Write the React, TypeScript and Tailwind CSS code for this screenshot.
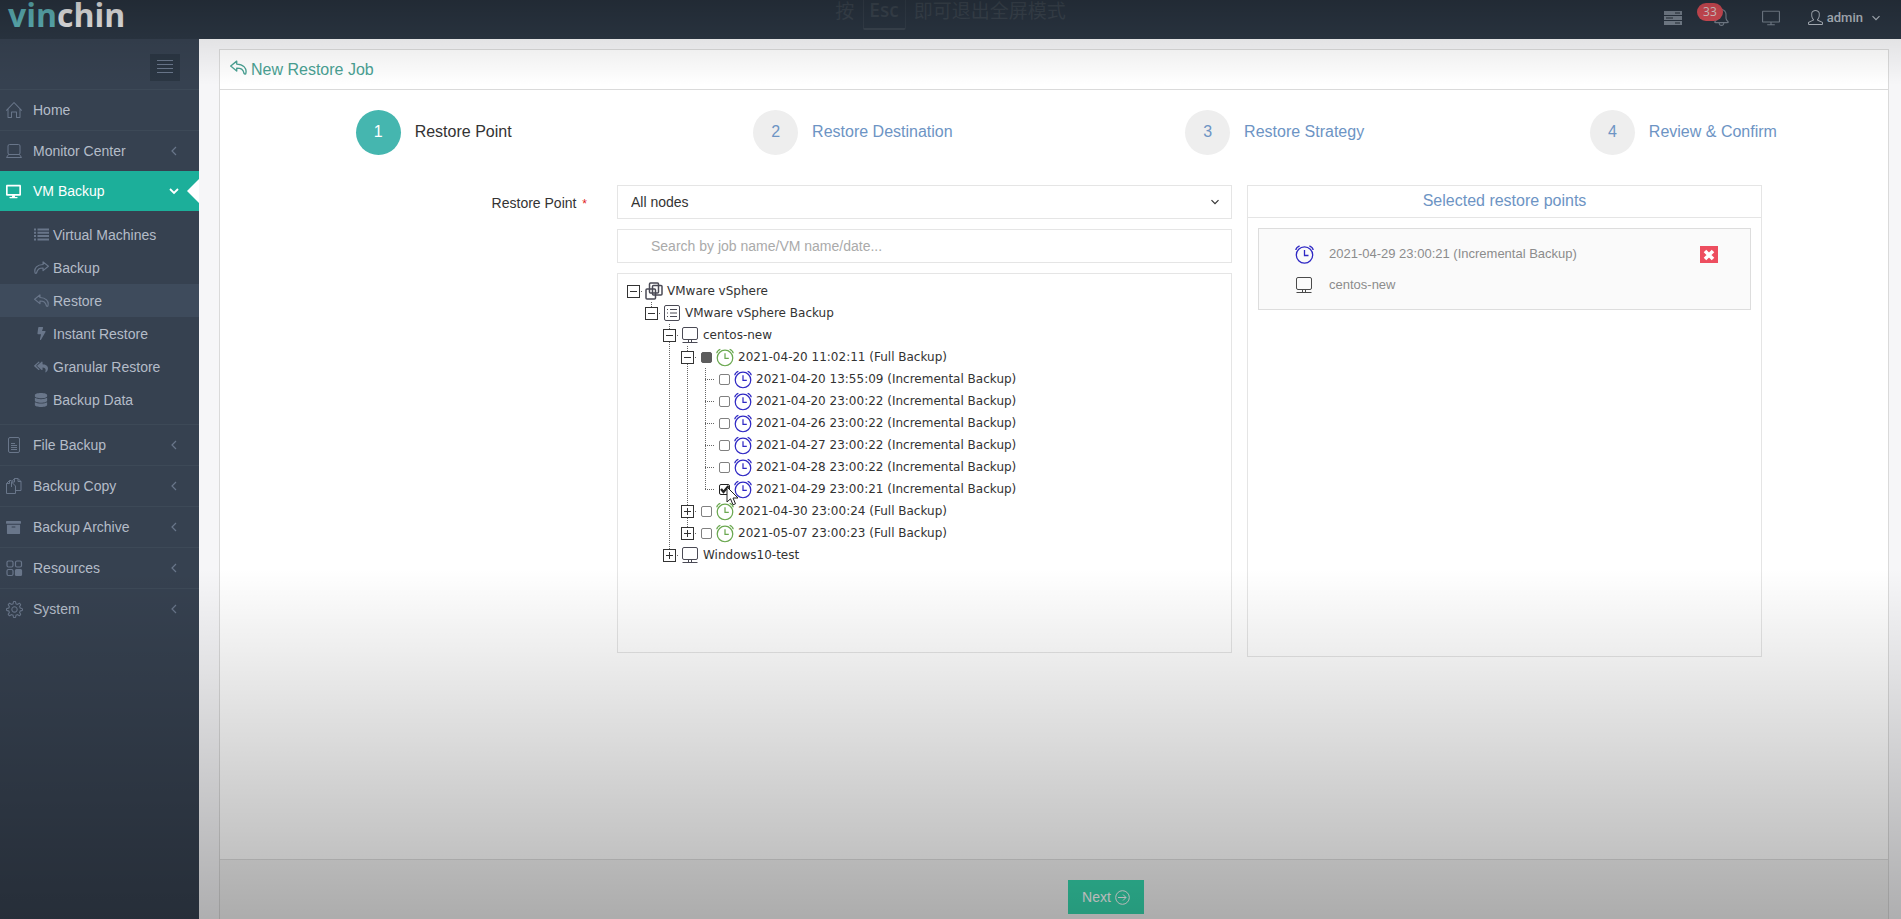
import { useState } from "react";
import type { ReactNode } from "react";
import { FaArchive, FaBolt, FaDatabase, FaDesktop, FaReplyAll } from "react-icons/fa";
import { SlBell, SlHome, SlScreenDesktop, SlSettings, SlUser } from "react-icons/sl";

function ArrowIcon({ forward = false, size = 16 }: { forward?: boolean; size?: number }) {
  return (
    <svg width={size} height={size} viewBox="0 0 24 24" fill="none" stroke="currentColor" strokeWidth="1.900" strokeLinejoin="round" aria-hidden="true">
      <path
        transform={forward ? "matrix(-1 0 0 1 24 0)" : undefined}
        d="M9.500 3 1 10l8.500 7v-4.200c6 0 9 1.200 10.500 8 .4.600 1.600.600 2.200 0C24.500 13 18.500 7.200 9.500 7.200z"
      />
    </svg>
  );
}

function ListIcon() {
  return (
    <svg width="15" height="13" viewBox="0 0 15 13" stroke="currentColor" strokeWidth="2" aria-hidden="true">
      <path d="M0 1.500h2M3.500 1.500H15M0 4.800h2M3.500 4.800H15M0 8.100h2M3.500 8.100H15M0 11.400h2M3.500 11.400H15" />
    </svg>
  );
}

function LaptopIcon() {
  return (
    <svg width="16" height="16" viewBox="0 0 16 16" fill="none" stroke="currentColor" aria-hidden="true">
      <rect x="2" y="1.500" width="12" height="10" rx="1.500" />
      <path d="M2.500 11.500h11l2 3H.5z" />
    </svg>
  );
}

function FileIcon() {
  return (
    <svg width="16" height="18" viewBox="0 0 16 18" fill="none" stroke="currentColor" aria-hidden="true">
      <rect x="2.500" y="1.500" width="11" height="15" rx="1.500" />
      <path d="M5 7.500h4M5 9.500h6M5 11.500h6M5 13.500h6" />
    </svg>
  );
}

function CopyIcon() {
  return (
    <svg width="16" height="18" viewBox="0 0 16 18" fill="none" stroke="currentColor" aria-hidden="true">
      <path d="M5.500 3.500h-2l-3 3v10h9v-3M3.500 3.500v3h-3M5.500 5l3-3.500h3.500l3 3v9H9.500M5.500 5v5M8.500 1.500V5h-3l4 4v5M12 1.500v3h3" />
    </svg>
  );
}

function ResourcesIcon() {
  return (
    <svg width="17" height="17" viewBox="0 0 17 17" fill="none" stroke="currentColor" strokeWidth="1.200" aria-hidden="true">
      <rect x="1" y="1" width="6" height="6" rx="1.500" />
      <rect x="9.500" y="1" width="6" height="6" rx="1.500" />
      <rect x="1" y="9.500" width="6" height="6" rx="1.500" />
      <rect x="9.500" y="9.500" width="6" height="6" rx="1" fill="currentColor" />
    </svg>
  );
}

function ServerIcon() {
  return (
    <svg width="18" height="14" viewBox="0 0 18 14" aria-hidden="true">
      <path fill="currentColor" d="M0 0h18v4H0zM0 5h18v4H0zM0 10h18v4H0z" />
      <path className="stroke-[#27303b]" d="M11 2h5M2 7h7M11 12h5" />
    </svg>
  );
}

function Chevron({ dir, size = 10 }: { dir: "left" | "down"; size?: number }) {
  return (
    <svg width={size} height={size} viewBox="0 0 10 10" fill="none" stroke="currentColor" strokeWidth="1.200" aria-hidden="true">
      <path d={dir === "left" ? "M7 1 3 5l4 4" : "M1.500 3.200 5 6.700l3.500-3.500"} />
    </svg>
  );
}

function ClockIcon() {
  return (
    <svg width="19" height="19" viewBox="0 0 19 19" fill="none" stroke="currentColor" strokeWidth="1.300" aria-hidden="true">
      <circle cx="9.500" cy="10" r="8.200" />
      <path d="M9.500 5v5.500h4M.8 5Q1.200 2.300 4.600.8M18.200 5Q17.800 2.300 14.400.8" />
    </svg>
  );
}

function VmIcon() {
  return (
    <svg width="18" height="18" viewBox="0 0 18 18" fill="none" stroke="currentColor" aria-hidden="true">
      <rect x="1.500" y="1.500" width="15" height="12" rx="1.500" />
      <path d="M7.500 14v2M10.500 14v2M1.500 16.500h15" />
    </svg>
  );
}

function ClusterIcon() {
  return (
    <svg width="18" height="18" viewBox="0 0 18 18" fill="none" stroke="currentColor" strokeWidth="1.500" aria-hidden="true">
      <rect x="4.500" y="1" width="9" height="10" rx="1" />
      <rect x="7.500" y="3.500" width="9.500" height="9.500" rx="1" />
      <rect x="1" y="7" width="9.500" height="10" rx="1" />
    </svg>
  );
}

function JobIcon() {
  return (
    <svg width="18" height="18" viewBox="0 0 18 18" fill="none" stroke="currentColor" aria-hidden="true">
      <rect x="1.500" y="1.500" width="15" height="15" rx="1.500" />
      <path d="M4 5.500h1M4 9h1M4 12.500h1M7 5.500h7M7 9h7M7 12.500h7" />
    </svg>
  );
}

type MenuItem = { label: string; icon: ReactNode };

const subMenu: MenuItem[] = [
  { label: "Virtual Machines", icon: <ListIcon /> },
  { label: "Backup", icon: <ArrowIcon forward size={15} /> },
  { label: "Restore", icon: <ArrowIcon size={15} /> },
  { label: "Instant Restore", icon: <FaBolt size={13} /> },
  { label: "Granular Restore", icon: <FaReplyAll size={14} /> },
  { label: "Backup Data", icon: <FaDatabase size={14} /> },
];

const lowerMenu: MenuItem[] = [
  { label: "File Backup", icon: <FileIcon /> },
  { label: "Backup Copy", icon: <CopyIcon /> },
  { label: "Backup Archive", icon: <FaArchive size={15} /> },
  { label: "Resources", icon: <ResourcesIcon /> },
  { label: "System", icon: <SlSettings size={17} /> },
];

function NavRow({ item, expandable = true }: { item: MenuItem; expandable?: boolean }) {
  return (
    <li className="border-t border-[#3d4957]">
      <a href="#" className="flex h-10 items-center pr-5 pl-1.5 text-[#b4bcc8]">
        <span className="flex w-[27px] text-[#69768a]">{item.icon}</span>
        <span className="flex-1">{item.label}</span>
        {expandable && (
          <span className="text-[#69768a]">
            <Chevron dir="left" />
          </span>
        )}
      </a>
    </li>
  );
}

function Sidebar() {
  return (
    <nav className="w-[199px] shrink-0 bg-[#364150] text-sm">
      <div className="flex h-[50px] items-center justify-end pt-2 pr-[19px] pb-0.5">
        <button type="button" aria-label="Toggle menu" className="flex h-[27px] w-[30px] items-center justify-center bg-[#2b3643] text-[#69768a]">
          <svg width="16" height="14" viewBox="0 0 16 14" stroke="currentColor" aria-hidden="true">
            <path d="M0 .5h16M0 4.500h16M0 8.500h16M0 12.500h16" />
          </svg>
        </button>
      </div>
      <ul>
        <NavRow item={{ label: "Home", icon: <SlHome size={16} /> }} expandable={false} />
        <NavRow item={{ label: "Monitor Center", icon: <LaptopIcon /> }} />
        <li>
          <a href="#" className="flex h-10 items-center bg-[#1caf9a] pl-1.5 text-white">
            <span className="flex w-[27px]">
              <FaDesktop size={15} />
            </span>
            <span className="flex-1">VM Backup</span>
            <svg width="10" height="10" viewBox="0 0 10 10" fill="none" stroke="currentColor" strokeWidth="1.800" aria-hidden="true">
              <path d="M1 3l4 4 4-4" />
            </svg>
            <svg className="ml-2" width="12" height="24" viewBox="0 0 12 24" fill="#fff" aria-hidden="true">
              <path d="M12 0v24L0 12z" />
            </svg>
          </a>
          <ul className="pt-[7px] pb-2">
            {subMenu.map((item) => (
              <li key={item.label}>
                <a
                  href="#"
                  className={`flex h-[33px] items-center pl-[33px] text-[#b4bcc8] ${item.label === "Restore" ? "bg-[#3e4b5c]" : ""}`}
                >
                  <span className="mr-1 flex w-4 justify-center text-[#69768a]">{item.icon}</span>
                  {item.label}
                </a>
              </li>
            ))}
          </ul>
        </li>
        {lowerMenu.map((item) => (
          <NavRow key={item.label} item={item} />
        ))}
      </ul>
    </nav>
  );
}

function Header() {
  return (
    <header className="relative flex h-[39px] shrink-0 items-center justify-between bg-[#2b3643] pl-2">
      <a href="#" className="self-start font-['Open_Sans'] text-[32px] leading-[30px] font-bold text-[#eeeeee]">
        <span className="text-[#5fb5ba]">vin</span>chin
      </a>
      <p className="absolute top-0 left-1/2 flex -translate-x-1/2 items-start gap-2 font-['Noto_Sans_CJK_SC',sans-serif] text-[19px] leading-5 whitespace-nowrap text-[#3c4651]">
        按
        <kbd className="h-[30px] rounded-b-xs border-x border-b-2 border-[#3c4651] px-1.5 font-['Open_Sans'] font-semibold">Esc</kbd>
        即可退出全屏模式
      </p>
      <div className="flex h-full items-center pr-5 pb-1 text-[#7c8794]">
        <button type="button" aria-label="Tasks" className="mr-[15px]">
          <ServerIcon />
        </button>
        <button type="button" aria-label="Notifications" className="mr-8 flex items-center">
          <span className="z-10 -mt-3 -mr-2.5 h-[18px] rounded-full bg-[#e0505a] px-1.5 font-['Open_Sans'] text-xs leading-[18px] text-[#eadada]">33</span>
          <SlBell size={17} />
        </button>
        <button type="button" aria-label="Screen" className="mr-7">
          <SlScreenDesktop size={18} />
        </button>
        <button type="button" className="flex items-center font-['Roboto'] text-[13px] font-medium text-[#b9c0c9]">
          <SlUser size={15} />
          <span className="mr-2 ml-1">admin</span>
          <Chevron dir="down" size={10} />
        </button>
      </div>
    </header>
  );
}

const steps = ["Restore Point", "Restore Destination", "Restore Strategy", "Review & Confirm"];

function Steps() {
  return (
    <ol className="grid grid-cols-[427fr_411fr_432fr_385fr] pt-5 pr-3 text-base">
      {steps.map((label, i) => (
        <li key={label} className="flex items-center justify-center gap-3.5">
          <span
            className={`flex size-[45px] items-center justify-center rounded-full pb-0.5 ${i === 0 ? "bg-[#45b6af] text-white" : "bg-[#eeeeee] text-[#6d94c4]"}`}
          >
            {i + 1}
          </span>
          <span className={`pb-0.5 ${i === 0 ? "text-[#333333]" : "text-[#6d94c4]"}`}>{label}</span>
        </li>
      ))}
    </ol>
  );
}

type Cell = "gap" | "line" | "open" | "openMore" | "openRoot" | "closed" | "closedMore" | "leaf" | "leafLast";

function Branch({ kind }: { kind: Cell }) {
  const above = kind !== "gap" && kind !== "openRoot";
  const below = kind === "line" || kind === "openMore" || kind === "closedMore" || kind === "leaf";
  const side = kind !== "gap" && kind !== "line";
  const box = side && !kind.startsWith("leaf");
  const drawing = (
    <svg width="18" height="22" viewBox="0 0 18 22" fill="none" aria-hidden="true">
      <g stroke="#666" strokeDasharray="1 1">
        {above && <path d="M9.500 0v12" />}
        {below && <path d="M9.500 12v10" />}
        {side && <path d="M9 11.500h9" />}
      </g>
      {box && (
        <g stroke="#333">
          <rect x="3.500" y="5.500" width="12" height="12" fill="#fff" />
          <path d={kind.startsWith("open") ? "M6 11.500h7" : "M6 11.500h7M9.500 8v7"} />
        </g>
      )}
    </svg>
  );
  if (!box) return drawing;
  return (
    <button type="button" aria-label={kind.startsWith("open") ? "Collapse" : "Expand"}>
      {drawing}
    </button>
  );
}

type Row = { cells: Cell[]; label: string; icon: "cluster" | "job" | "vm" | "full" | "inc"; check?: "off" | "on" | "part" };

const incrementals = [
  "2021-04-20 13:55:09",
  "2021-04-20 23:00:22",
  "2021-04-26 23:00:22",
  "2021-04-27 23:00:22",
  "2021-04-28 23:00:22",
  "2021-04-29 23:00:21",
];

const rows: Row[] = [
  { cells: ["openRoot"], label: "VMware vSphere", icon: "cluster" },
  { cells: ["gap", "open"], label: "VMware vSphere Backup", icon: "job" },
  { cells: ["gap", "gap", "openMore"], label: "centos-new", icon: "vm" },
  { cells: ["gap", "gap", "line", "openMore"], label: "2021-04-20 11:02:11 (Full Backup)", icon: "full", check: "part" },
  ...incrementals.map((time, i): Row => {
    const last = i === incrementals.length - 1;
    return {
      cells: ["gap", "gap", "line", "line", last ? "leafLast" : "leaf"],
      label: `${time} (Incremental Backup)`,
      icon: "inc",
      check: last ? "on" : "off",
    };
  }),
  { cells: ["gap", "gap", "line", "closedMore"], label: "2021-04-30 23:00:24 (Full Backup)", icon: "full", check: "off" },
  { cells: ["gap", "gap", "line", "closed"], label: "2021-05-07 23:00:23 (Full Backup)", icon: "full", check: "off" },
  { cells: ["gap", "gap", "closed"], label: "Windows10-test", icon: "vm" },
];

const rowIcons = {
  cluster: <ClusterIcon />,
  job: <JobIcon />,
  vm: <VmIcon />,
  full: <ClockIcon />,
  inc: <ClockIcon />,
};

const rowIconColors = {
  cluster: "text-[#4a4a55]",
  job: "text-[#4a4a55]",
  vm: "text-[#4a4a55]",
  full: "text-[#6aa84f]",
  inc: "text-[#2f28c4]",
};

function TreeRow({ row }: { row: Row }) {
  const [on, setOn] = useState(row.check === "on");
  return (
    <li className="flex h-[22px] items-center">
      {row.cells.map((kind, i) => (
        <Branch key={i} kind={kind} />
      ))}
      <label className="ml-px flex items-center">
        {row.check && (
          <span className="relative ml-1 flex">
            <input
              type="checkbox"
              checked={on}
              onChange={() => setOn(!on)}
              className={`size-[11px] appearance-none rounded-xs border ${row.check === "part" ? "border-[#5c5c5c] bg-[#5c5c5c]" : on ? "border-[#222222] bg-white" : "border-[#808080] bg-white"}`}
            />
            {on && (
              <svg className="absolute top-0 left-0" width="11" height="11" viewBox="0 0 11 11" fill="none" stroke="#222" strokeWidth="2.400" aria-hidden="true">
                <path d="M2 5l2.500 3L9.500 2" />
              </svg>
            )}
            {row.check === "on" && (
              <svg className="pointer-events-none absolute top-0.5 left-[7px] z-10" width="13" height="20" viewBox="0 0 13 20" fill="#fff" stroke="#222" aria-hidden="true">
                <path d="M1 1v15l3.500-3.200 2.500 6 2.500-1-2.500-5.800H12z" />
              </svg>
            )}
          </span>
        )}
        <span className={`mr-1 flex w-[18px] ${row.check ? "ml-1" : "ml-0.5"} ${rowIconColors[row.icon]}`}>{rowIcons[row.icon]}</span>
        {row.label}
      </label>
    </li>
  );
}

function RestoreForm() {
  return (
    <form className="grid grid-cols-[382fr_615fr_515fr_111fr] items-start gap-x-[15px] pt-[30px] text-sm">
      <label htmlFor="node" className="pt-2 pr-[15px] text-right text-[#333333]">
        Restore Point <span className="ml-0.5 text-xs text-[#e02222]">*</span>
      </label>
      <div className="flex flex-col gap-2.5">
        <div className="relative">
          <select id="node" className="block h-[34px] w-full appearance-none border border-[#e5e5e5] bg-white px-[13px] text-[#333333]">
            <option>All nodes</option>
          </select>
          <span className="pointer-events-none absolute top-3 right-3 text-[#333333]">
            <Chevron dir="down" />
          </span>
        </div>
        <input
          type="text"
          aria-label="Search restore points"
          placeholder="Search by job name/VM name/date..."
          className="h-[34px] w-full border border-[#e5e5e5] bg-white px-[33px] placeholder:text-[#aaaaaa]"
        />
        <ul className="h-[380px] border border-[#e5e5e5] pt-1.5 pl-1.5 font-['DejaVu_Sans'] text-xs text-[#333333]">
          {rows.map((row) => (
            <TreeRow key={row.label} row={row} />
          ))}
        </ul>
      </div>
      <section className="h-[472px] border border-[#e5e5e5]">
        <h2 className="border-b border-[#e5e5e5] pt-[3px] pb-1 text-center text-base text-[#6d94c4]">Selected restore points</h2>
        <div className="m-2.5 flex items-start border border-[#dddddd] bg-[#fafafa] pt-[15px] pr-8 pb-3.5 pl-9 text-[13px] leading-5 text-[#8c8c8c]">
          <dl className="grid flex-1 grid-cols-[20px_1fr] items-center gap-x-3.5 gap-y-[11px]">
            <dt className="text-[#2f28c4]">
              <ClockIcon />
            </dt>
            <dd>2021-04-29 23:00:21 (Incremental Backup)</dd>
            <dt className="text-[#4a4a4a]">
              <VmIcon />
            </dt>
            <dd>centos-new</dd>
          </dl>
          <button type="button" aria-label="Remove" className="mt-0.5 flex h-[17px] w-[18px] items-center justify-center bg-[#ed4e5f] text-white">
            <svg width="12" height="12" viewBox="0 0 12 12" stroke="currentColor" strokeWidth="3.600" aria-hidden="true">
              <path d="M2 2l8 8M10 2l-8 8" />
            </svg>
          </button>
        </div>
      </section>
    </form>
  );
}

export default function App() {
  return (
    <div className="relative flex h-screen flex-col overflow-hidden font-['Liberation_Sans',Arial,sans-serif]">
      <Header />
      <div className="flex min-h-0 flex-1">
        <Sidebar />
        <main className="flex flex-1 flex-col bg-[#f6f6f8] pt-2.5 pr-3 pl-5">
          <div className="-mb-4 flex flex-1 flex-col border border-[#dadada] bg-white">
            <h1 className="flex h-10 items-center gap-1 border-b border-[#dadada] pl-2.5 text-base text-[#4aa193]">
              <span className="pb-1">
                <ArrowIcon size={17} />
              </span>
              New Restore Job
            </h1>
            <div className="flex-1">
              <Steps />
              <RestoreForm />
            </div>
            <div className="flex justify-center border-t border-[#dfdfdf] bg-[#f3f3f3] py-5 pl-[104px]">
              <button type="button" className="flex h-[34px] items-center gap-1 bg-[#36d7ae] px-3.5 text-sm text-white">
                Next
                <svg width="15" height="15" viewBox="0 0 15 15" fill="none" stroke="currentColor" aria-hidden="true">
                  <circle cx="7.500" cy="7.500" r="6.800" />
                  <path d="M3 7.500h8M8 4.500l3 3-3 3" />
                </svg>
              </button>
            </div>
          </div>
        </main>
      </div>
      <div className="pointer-events-none absolute inset-x-0 top-0 z-20 h-[85px] bg-[linear-gradient(to_bottom,rgba(0,0,0,0.22),rgba(0,0,0,0.08)_39px,rgba(0,0,0,0))]" />
      <div className="pointer-events-none absolute inset-x-0 bottom-0 z-20 h-[350px] bg-[linear-gradient(to_top,rgba(0,0,0,0.29),rgba(0,0,0,0))]" />
    </div>
  );
}
